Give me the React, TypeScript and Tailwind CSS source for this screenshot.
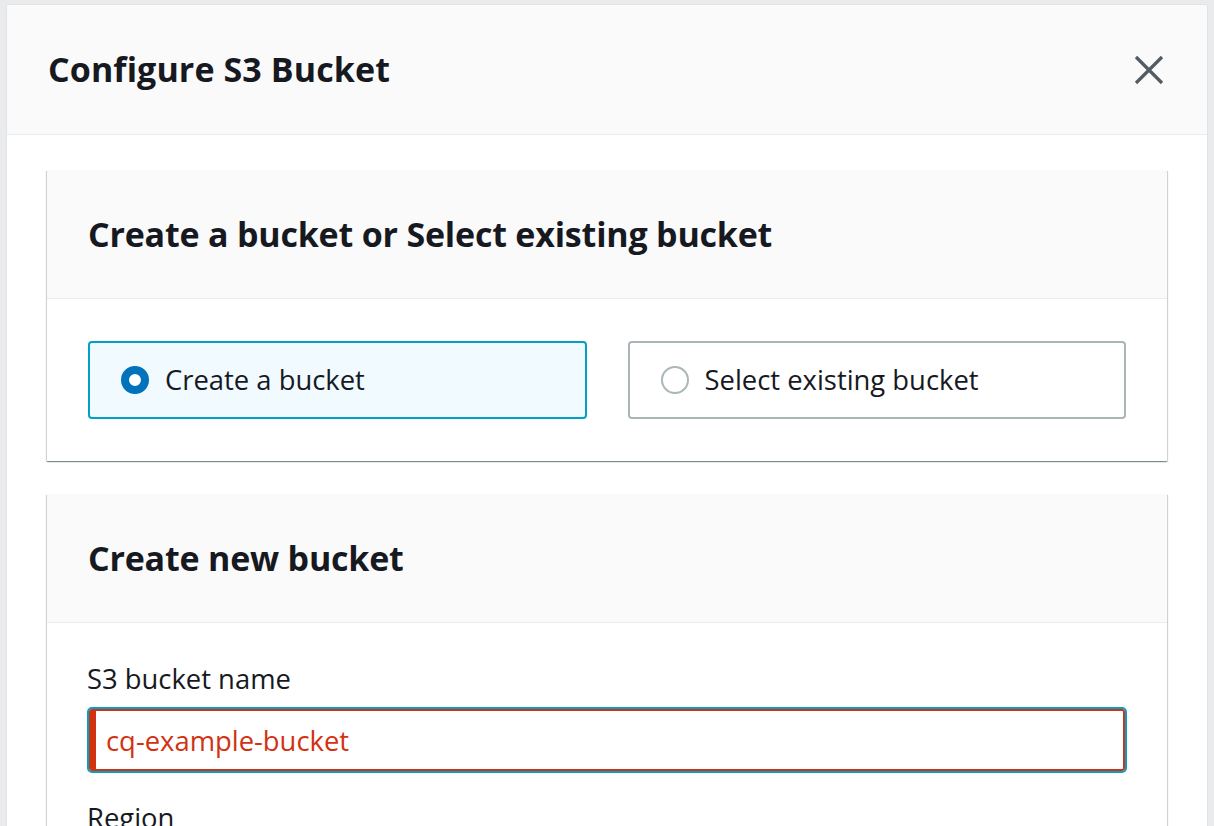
import React, { useState } from 'react';

const font = { fontFamily: '"Open Sans", "Noto Sans", Arial, sans-serif' };

const Radio = ({ checked }: { checked: boolean }) =>
  checked ? (
    <span className="block size-[28px] rounded-full border-[8px] border-[#0073bb] bg-white flex-shrink-0" />
  ) : (
    <span className="block size-[28px] rounded-full border-2 border-[#aab7b8] bg-white flex-shrink-0" />
  );

const Tile = ({ label, checked, onClick }: { label: string; checked: boolean; onClick: () => void }) => (
  <button
    onClick={onClick}
    className={`flex items-center gap-[16px] h-[78px] px-[31px] rounded-[4px] text-left ${
      checked ? 'border-2 border-[#00a1c9] bg-[#f1faff]' : 'border-2 border-[#aab7b8] bg-white'
    }`}
  >
    <Radio checked={checked} />
    <span className="text-[27.4px] text-[#16191f]">{label}</span>
  </button>
);

const Card = ({ title, children }: { title: string; children: React.ReactNode }) => (
  <div className="bg-white shadow-[0_1px_1px_0_rgba(0,28,36,0.3),1px_1px_1px_0_rgba(0,28,36,0.15),-1px_1px_1px_0_rgba(0,28,36,0.15)]">
    <div className="h-[129px] flex items-center px-[41px] bg-[#fafafa] border-b border-[#eaeded]">
      <h2 className="text-[34px] font-bold text-[#16191f] tracking-[-0.2px]">{title}</h2>
    </div>
    {children}
  </div>
);

export default function App() {
  const [mode, setMode] = useState<'create' | 'select'>('create');
  const [name, setName] = useState('cq-example-bucket');

  return (
    <div style={font} className="w-[1214px] h-[826px] overflow-hidden bg-[#e9ebed] pt-[5px] pl-[7px] pr-[7px]">
      <div className="bg-white h-full shadow-[0_0_1px_rgba(0,0,0,0.2)]">
        <div className="h-[130px] flex items-center justify-between pl-[41px] pr-[42px] bg-[#fafafa] border-b border-[#eaeded]">
          <h1 className="text-[34px] font-bold text-[#16191f] tracking-[0.1px]">Configure S3 Bucket</h1>
          <button className="text-[#545b64]">
            <svg width="32" height="32" viewBox="0 0 32 32" fill="none" stroke="currentColor" strokeWidth="3.2">
              <path d="M3 3 L29 29 M29 3 L3 29" />
            </svg>
          </button>
        </div>

        <div className="px-[40px] pt-[35px] flex flex-col gap-[33px]">
          <Card title="Create a bucket or Select existing bucket">
            <div className="grid grid-cols-2 gap-[41px] px-[41px] py-[42px]">
              <Tile label="Create a bucket" checked={mode === 'create'} onClick={() => setMode('create')} />
              <Tile label="Select existing bucket" checked={mode === 'select'} onClick={() => setMode('select')} />
            </div>
          </Card>

          <Card title="Create new bucket">
            <div className="px-[40px] pt-[39px] pb-[40px]">
              <label className="block text-[27.4px] text-[#16191f] leading-[34px] mb-[11px]">S3 bucket name</label>
              <div className="rounded-[5px] border-2 border-[#00a1c9]">
                <input
                  value={name}
                  onChange={(e) => setName(e.target.value)}
                  className="block w-full h-[62px] rounded-[3px] border-2 border-l-[7px] border-[#d13212] pl-[10px] text-[27.4px] text-[#d13212] outline-none"
                  style={font}
                />
              </div>
              <div className="mt-[24px] text-[27.4px] text-[#16191f]">Region</div>
            </div>
          </Card>
        </div>
      </div>
    </div>
  );
}
